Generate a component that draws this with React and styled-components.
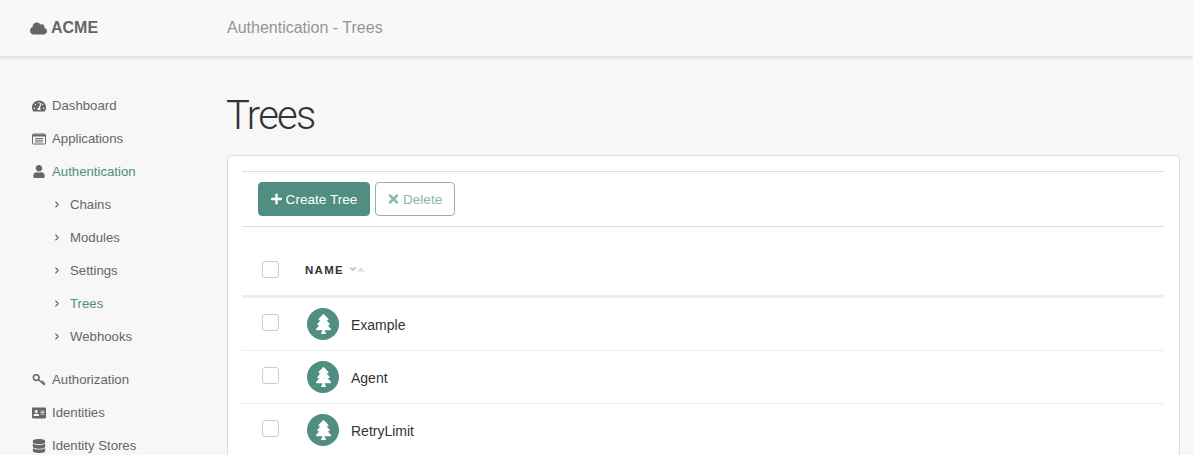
import React from 'react';
import styled, { createGlobalStyle } from 'styled-components';
import {
  FaCloud,
  FaTachometerAlt,
  FaUser,
  FaAddressCard,
  FaDatabase,
  FaPlus,
  FaTimes,
  FaTree,
} from 'react-icons/fa';
import { FiChevronRight } from 'react-icons/fi';

const GlobalStyle = createGlobalStyle`
  html, body {
    margin: 0;
    height: 100%;
    overflow: hidden;
    background: #f7f7f7;
    font-family: "Liberation Sans", Arial, sans-serif;
    color: #333;
  }
`;

const Header = styled.header`
  display: flex;
  align-items: center;
  height: 57px;
  box-sizing: border-box;
  background: #f8f8f8;
  border-bottom: 1px solid #e2e2e2;
  box-shadow: 0 1px 3px rgba(0, 0, 0, 0.12);
`;

const Brand = styled.a`
  display: flex;
  align-items: center;
  gap: 4px;
  width: 227px;
  padding-left: 30px;
  box-sizing: border-box;
  font-size: 16px;
  font-weight: 700;
  color: #666;
`;

const Crumb = styled.div`
  font-size: 16px;
  color: #959595;
`;

const Layout = styled.div`
  display: flex;
`;

const Sidebar = styled.nav`
  width: 227px;
  flex: none;
  padding: 32px 0 0 32px;
  box-sizing: border-box;
`;

const NavGroup = styled.div`
  margin-bottom: ${(p) => (p.$spaced ? '10px' : '0')};
`;

const NavItem = styled.a`
  display: flex;
  align-items: center;
  height: 33px;
  font-size: 13.2px;
  color: ${(p) => (p.$active ? '#4f8e80' : '#666')};
  padding-left: ${(p) => (p.$sub ? '20px' : '0')};

  & > svg {
    flex: none;
    width: ${(p) => (p.$sub ? '10px' : '14px')};
    height: ${(p) => (p.$sub ? '11px' : p.$small ? '13px' : '14px')};
    margin-right: ${(p) => (p.$sub ? '8px' : '6px')};
    color: #666;
    stroke-width: ${(p) => (p.$sub ? '2.6' : 'inherit')};
  }
`;

const Main = styled.main`
  flex: 1;
  padding: 0 13px 0 0;
  min-width: 0;
`;

const Title = styled.h1`
  margin: 0 0 0 -1px;
  padding-top: 35px;
  height: 63px;
  font-family: Roboto, "Liberation Sans", sans-serif;
  font-size: 40px;
  font-weight: 300;
  letter-spacing: -1.7px;
  line-height: 47px;
  color: #333;
`;

const Card = styled.section`
  background: #fff;
  border: 1px solid #ddd;
  border-radius: 4px;
  padding: 15px 15px 0 14px;
`;

const Toolbar = styled.div`
  display: flex;
  gap: 5px;
  padding: 10px 16px;
  height: 56px;
  box-sizing: border-box;
  border-top: 1px solid #ddd;
  border-bottom: 1px solid #ddd;
`;

const Button = styled.button`
  display: flex;
  align-items: center;
  gap: 3.6px;
  height: 34px;
  padding: 0 12px;
  box-sizing: border-box;
  font-family: inherit;
  font-size: 13.6px;
  border-radius: 4px;
  border: 1px solid #4f8e80;
  background: ${(p) => (p.$primary ? '#4f8e80' : '#fff')};
  color: ${(p) => (p.$primary ? '#fff' : '#4f8e80')};

  &:disabled {
    opacity: 0.65;
  }

  & > svg {
    width: 11px;
    height: 14px;
  }
`;

const Row = styled.div`
  display: flex;
  align-items: center;
  height: 53px;
  box-sizing: border-box;
  border-bottom: 1px solid #eee;
`;

const HeadRow = styled(Row)`
  height: 71px;
  padding-top: 17px;
  border-bottom: 3px solid #eee;
`;

const Check = styled.span`
  flex: none;
  width: 17px;
  height: 17px;
  margin: ${(p) => (p.$head ? '0' : '-3px')} 0 0 20px;
  box-sizing: border-box;
  border: 1px solid #ccc;
  border-radius: 3px;
  background: #fff;
`;

const ColumnTitle = styled.div`
  display: flex;
  align-items: center;
  margin-left: 26px;
  font-size: 11.5px;
  font-weight: 700;
  letter-spacing: 1.3px;
  color: #333;
`;

const SortIcon = styled.svg`
  width: 16px;
  height: 5px;
  margin-left: 5px;
`;

const TreeBadge = styled.span`
  flex: none;
  display: flex;
  align-items: center;
  justify-content: center;
  width: 32px;
  height: 32px;
  margin-left: 28px;
  border-radius: 50%;
  background: #4f8e80;
  color: #fff;

  & > svg {
    width: 15px;
    height: 20px;
  }
`;

const TreeName = styled.a`
  margin: 1px 0 0 12px;
  font-size: 14px;
  color: #333;
`;

const WindowIcon = () => (
  <svg viewBox="0 0 14 12" fill="none">
    <rect x="0.5" y="1" width="13" height="10" rx="1" stroke="currentColor" />
    <path d="M1 1.5h12v2H1z" fill="currentColor" />
    <path d="M3 5.5h8M3 7.2h8M3 8.9h8" stroke="currentColor" strokeWidth="0.9" />
  </svg>
);

const KeyIcon = () => (
  <svg viewBox="0 0 14 14" fill="none" stroke="currentColor">
    <circle cx="4.2" cy="4.6" r="2.8" strokeWidth="1.5" />
    <path d="M6.4 6.6l6.4 5.2M10 9.5l1.4-1.6M11.8 11l1-1.2" strokeWidth="1.5" />
  </svg>
);

const topNav = [
  { label: 'Dashboard', icon: FaTachometerAlt },
  { label: 'Applications', icon: WindowIcon },
  { label: 'Authentication', icon: FaUser, active: true, small: true },
];

const subNav = [
  { label: 'Chains' },
  { label: 'Modules' },
  { label: 'Settings' },
  { label: 'Trees', active: true },
  { label: 'Webhooks' },
];

const bottomNav = [
  { label: 'Authorization', icon: KeyIcon },
  { label: 'Identities', icon: FaAddressCard },
  { label: 'Identity Stores', icon: FaDatabase },
];

const trees = ['Example', 'Agent', 'RetryLimit'];

export default function App() {
  return (
    <>
      <GlobalStyle />
      <Header>
        <Brand>
          <FaCloud size={17} />
          ACME
        </Brand>
        <Crumb>Authentication - Trees</Crumb>
      </Header>
      <Layout>
        <Sidebar>
          {topNav.map(({ label, icon: Icon, active, small }) => (
            <NavItem key={label} $active={active} $small={small}>
              <Icon />
              {label}
            </NavItem>
          ))}
          <NavGroup $spaced>
            {subNav.map(({ label, active }) => (
              <NavItem key={label} $sub $active={active}>
                <FiChevronRight />
                {label}
              </NavItem>
            ))}
          </NavGroup>
          {bottomNav.map(({ label, icon: Icon }) => (
            <NavItem key={label}>
              <Icon />
              {label}
            </NavItem>
          ))}
        </Sidebar>
        <Main>
          <Title>Trees</Title>
          <Card>
            <Toolbar>
              <Button $primary>
                <FaPlus />
                Create Tree
              </Button>
              <Button disabled>
                <FaTimes />
                Delete
              </Button>
            </Toolbar>
            <HeadRow>
              <Check $head />
              <ColumnTitle>
                NAME
                <SortIcon viewBox="0 0 16 5">
                  <path d="M0 0.5h8L4 4.5z" fill="#ccc" />
                  <path d="M8 4.5h8L12 0.5z" fill="#ddd" />
                </SortIcon>
              </ColumnTitle>
            </HeadRow>
            {trees.map((name) => (
              <Row key={name}>
                <Check />
                <TreeBadge>
                  <FaTree />
                </TreeBadge>
                <TreeName>{name}</TreeName>
              </Row>
            ))}
          </Card>
        </Main>
      </Layout>
    </>
  );
}
